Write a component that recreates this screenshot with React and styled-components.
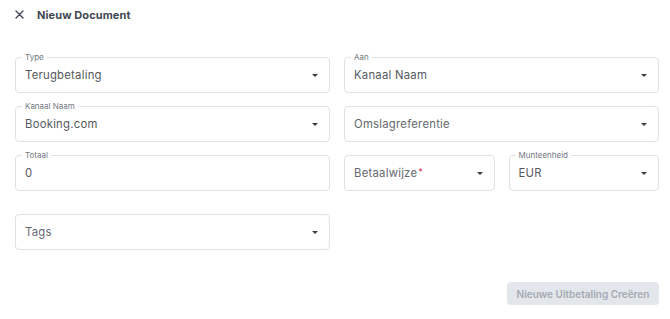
import React from 'react';
import styled, { createGlobalStyle } from 'styled-components';

const GlobalStyle = createGlobalStyle`
  html, body {
    margin: 0;
    padding: 0;
    background: #ffffff;
    font-family: "Inter", "Open Sans", sans-serif;
  }
`

const Page = styled.div`
  width: 670px;
  height: 319px;
  box-sizing: border-box;
  padding: 7px 11px 0 15px;
  display: flex;
  flex-direction: column;
`

const Header = styled.div`
  display: flex;
  align-items: center;
  gap: 13px;
  height: 15px;
  color: #424853;
`

const Close = styled.button`
  border: none;
  background: none;
  padding: 0;
  width: 9px;
  height: 9px;
  display: flex;
  cursor: pointer;
`

const Title = styled.h1`
  margin: 0;
  font-size: 11px;
  font-weight: 700;
  letter-spacing: 0.1px;
`

const Grid = styled.div`
  margin-top: 35px;
  display: grid;
  grid-template-columns: 1fr 1fr;
  column-gap: 14px;
  row-gap: 13px;
`

const Split = styled.div`
  display: grid;
  grid-template-columns: 1fr 1fr;
  column-gap: 14px;
`

const Field = styled.div`
  position: relative;
  height: 36px;
  box-sizing: border-box;
  border: 1px solid #dfe1e4;
  border-radius: 4px;
  display: flex;
  align-items: center;
  padding: 0 9px 0 9px;
  margin-top: ${p => p.$gap || 0}px;
  grid-column: ${p => p.$col || 'auto'};
`

const Label = styled.span`
  position: absolute;
  top: -6px;
  left: 6px;
  padding: 0 3px;
  background: #ffffff;
  font-size: 8px;
  line-height: 10px;
  color: #74787f;
`

const Value = styled.span`
  flex: 1;
  font-size: 11.3px;
  color: ${p => (p.$placeholder ? '#64686e' : '#55585e')};
  letter-spacing: 0.25px;
`

const Req = styled.span`
  color: #e5304f;
  font-size: 9px;
  vertical-align: top;
  margin-left: 1px;
`

const Caret = styled.span`
  width: 0;
  height: 0;
  border-left: 3px solid transparent;
  border-right: 3px solid transparent;
  border-top: 3.5px solid #3a3d42;
  margin-right: 2px;
`

const Footer = styled.div`
  margin-top: 32px;
  display: flex;
  justify-content: flex-end;
`

const Submit = styled.button`
  width: 152px;
  height: 23px;
  border: none;
  border-radius: 4px;
  background: #e3e6ea;
  color: #a3aab4;
  font-family: inherit;
  font-size: 10px;
  font-weight: 600;
  cursor: not-allowed;
`

const Select = ({ label, value, placeholder, required, gap, col }) => (
  <Field $gap={gap} $col={col}>
    {label && <Label>{label}</Label>}
    <Value $placeholder={placeholder}>
      {value}
      {required && <Req>*</Req>}
    </Value>
    <Caret />
  </Field>
)

const App = () => {
  return (
    <Page>
      <GlobalStyle />
      <Header>
        <Close aria-label="close">
          <svg width="9" height="9" viewBox="0 0 9 9">
            <path d="M1 1L8 8M8 1L1 8" stroke="#3b4350" strokeWidth="1.3" strokeLinecap="round" />
          </svg>
        </Close>
        <Title>Nieuw Document</Title>
      </Header>
      <Grid>
        <Select label="Type" value="Terugbetaling" />
        <Select label="Aan" value="Kanaal Naam" />
        <Select label="Kanaal Naam" value="Booking.com" />
        <Select value="Omslagreferentie" placeholder />
        <Field>
          <Label>Totaal</Label>
          <Value>0</Value>
        </Field>
        <Split>
          <Select value="Betaalwijze" placeholder required />
          <Select label="Munteenheid" value="EUR" />
        </Split>
        <Select value="Tags" placeholder gap={10} col="1" />
      </Grid>
      <Footer>
        <Submit disabled>Nieuwe Uitbetaling Creëren</Submit>
      </Footer>
    </Page>
  );
}

export default App;
